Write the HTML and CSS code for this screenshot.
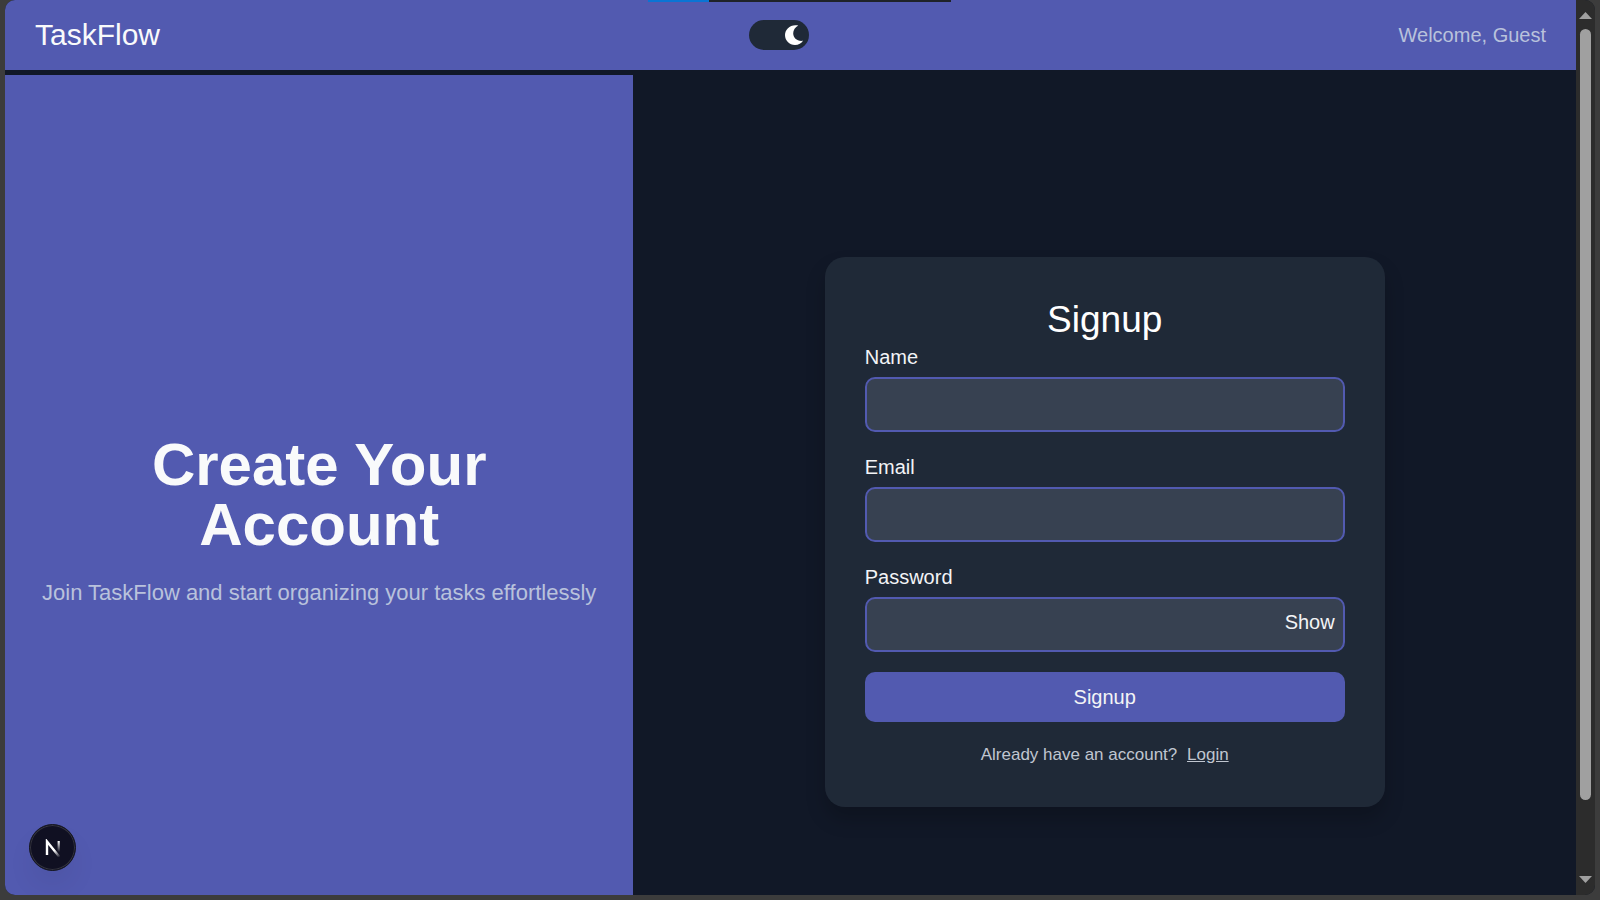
FILE: index.html
```html
<!DOCTYPE html>
<html lang="en">
<head>
<meta charset="utf-8">
<title>TaskFlow - Signup</title>
<link rel="stylesheet" href="styles.css">
</head>
<body>
<div class="window">
  <div class="progress"><span class="progress-fill"></span></div>
  <div class="page">
    <header class="navbar">
      <span class="brand">TaskFlow</span>
      <button class="theme-toggle" type="button" aria-label="Toggle dark mode">
        <svg class="moon" viewBox="0 0 20 20" aria-hidden="true"><path d="M14.300 0.500C7-1.300 1 3.800 1 10c0 5.600 4.300 10 10 10 3.600 0 6.500-1.500 8-4.200C13.300 16.700 9.200 13 9.200 8.300c0-3.300 2-6.200 5.100-7.800z" fill="#fff"/></svg>
      </button>
      <span class="welcome">Welcome, Guest</span>
    </header>
    <main class="content">
      <section class="hero">
        <h1 class="hero-title">Create Your Account</h1>
        <p class="hero-text">Join TaskFlow and start organizing your tasks effortlessly</p>
      </section>
      <section class="form-side">
        <form class="card">
          <h2 class="card-title">Signup</h2>
          <label class="label" for="name">Name</label>
          <input class="input" id="name" type="text">
          <label class="label" for="email">Email</label>
          <input class="input" id="email" type="email">
          <label class="label" for="password">Password</label>
          <div class="password">
            <input class="input" id="password" type="password">
            <button class="show" type="button">Show</button>
          </div>
          <button class="submit" type="submit">Signup</button>
          <p class="login">Already have an account? <a class="login-link" href="#">Login</a></p>
        </form>
      </section>
    </main>
  </div>
  <div class="scrollbar" aria-hidden="true">
    <svg class="arrow" viewBox="0 0 13 7"><path d="M6.500 0L13 7H0z" fill="#a0a0a0"/></svg>
    <div class="track"><div class="thumb"></div></div>
    <svg class="arrow" viewBox="0 0 13 7"><path d="M0 0H13L6.500 7z" fill="#a0a0a0"/></svg>
  </div>
  <button class="dev-badge" type="button" aria-label="Open Next.js Dev Tools">
    <svg class="dev-logo" viewBox="0 0 16 18" fill="none" aria-hidden="true">
      <defs>
        <linearGradient id="diag" gradientUnits="userSpaceOnUse" x1="10" y1="11" x2="15" y2="18"><stop stop-color="#fff"/><stop offset="1" stop-color="#fff" stop-opacity="0"/></linearGradient>
        <linearGradient id="stem" gradientUnits="userSpaceOnUse" x1="14" y1="2" x2="14" y2="13"><stop stop-color="#fff"/><stop offset="1" stop-color="#fff" stop-opacity="0"/></linearGradient>
      </defs>
      <path d="M2 16V2.500L14.500 18" stroke="url(#diag)" stroke-width="2.400"/>
      <path d="M13.700 2V13" stroke="url(#stem)" stroke-width="2.200"/>
    </svg>
  </button>
</div>
</body>
</html>
```
FILE: styles.css
```css
* { box-sizing: border-box; }

body {
  margin: 0;
  padding: 0 5px 5px;
  height: 100vh;
  overflow: hidden;
  background: #3c3c3c;
  color: #f3f4f6;
  font-family: "Liberation Sans", Arial, sans-serif;
  font-size: 20px;
  line-height: 30px;
}

h1, h2, p { margin: 0; font-weight: 400; }

button, input { font: inherit; color: inherit; }

button { border: 0; padding: 0; cursor: pointer; }

.window {
  position: relative;
  display: flex;
  height: 100%;
  overflow: hidden;
  border-radius: 10px;
  background: #111827;
}

.progress {
  position: absolute;
  top: 0;
  left: 643px;
  width: 303px;
  height: 2px;
  background: #1f2328;
}

.progress-fill {
  display: block;
  width: 20%;
  height: 100%;
  background: #0a74d4;
}

.page {
  flex: 1;
  display: flex;
  flex-direction: column;
  gap: 5px;
  overflow: hidden;
}

.navbar {
  flex: none;
  display: flex;
  align-items: center;
  justify-content: space-between;
  height: 70px;
  padding: 0 30px;
  background: #525ab0;
}

.brand { font-size: 30px; color: #f9fafb; }

.welcome { color: #b9c2dc; }

.theme-toggle {
  display: flex;
  align-items: center;
  justify-content: flex-end;
  width: 60px;
  height: 30px;
  padding: 0 5px;
  border-radius: 15px;
  background: #1f2937;
}

.moon { width: 20px; height: 20px; }

.content {
  flex: none;
  display: flex;
  min-height: calc(100vh + 14px);
}

.hero {
  width: 40%;
  display: flex;
  flex-direction: column;
  justify-content: center;
  gap: 20px;
  padding: 0 30px 20px;
  background: #525ab0;
  text-align: center;
}

.hero-title {
  padding: 0 60px;
  font-size: 60px;
  line-height: 60px;
  font-weight: 700;
  color: #f9fafb;
}

.hero-text {
  font-size: 22px;
  line-height: 35px;
  color: #b9c2dc;
}

.form-side {
  flex: 1;
  display: flex;
  align-items: center;
  justify-content: center;
}

.card {
  display: flex;
  flex-direction: column;
  width: 560px;
  padding: 40px;
  border-radius: 20px;
  background: #1f2937;
  box-shadow: 0 12px 20px rgba(0, 0, 0, 0.2);
}

.card-title {
  font-size: 37px;
  line-height: 45px;
  text-align: center;
  color: #fff;
}

.label { margin-bottom: 5px; }

.input {
  width: 100%;
  height: 55px;
  margin-bottom: 20px;
  padding: 0 12px;
  border: 2px solid #525ab0;
  border-radius: 10px;
  background: #374151;
  outline: 0;
}

.password { position: relative; display: flex; }

.show {
  position: absolute;
  top: 10px;
  right: 10px;
  background: none;
}

.submit {
  height: 50px;
  margin-bottom: 20px;
  border-radius: 10px;
  background: #525ab0;
}

.login {
  font-size: 17px;
  line-height: 25px;
  text-align: center;
  color: #c0c6d0;
}

.login-link { margin-left: 5px; color: inherit; }

.scrollbar {
  display: flex;
  flex-direction: column;
  align-items: center;
  width: 19px;
  padding: 12px 0;
  background: #2c2c2c;
}

.arrow { width: 13px; height: 7px; }

.track { flex: 1; padding: 10px 0 0; }

.thumb {
  width: 11px;
  height: 91%;
  border-radius: 6px;
  background: #a0a0a0;
}

.dev-badge {
  position: absolute;
  left: 24px;
  bottom: 24px;
  display: flex;
  align-items: center;
  justify-content: center;
  width: 47px;
  height: 47px;
  border: 1px solid #15161f;
  border-radius: 50%;
  background: #101022;
  box-shadow: inset 0 0 0 1px #34343f, 0 16px 32px -8px rgba(0, 0, 0, 0.12);
}

.dev-logo { width: 16px; height: 18px; }
```
